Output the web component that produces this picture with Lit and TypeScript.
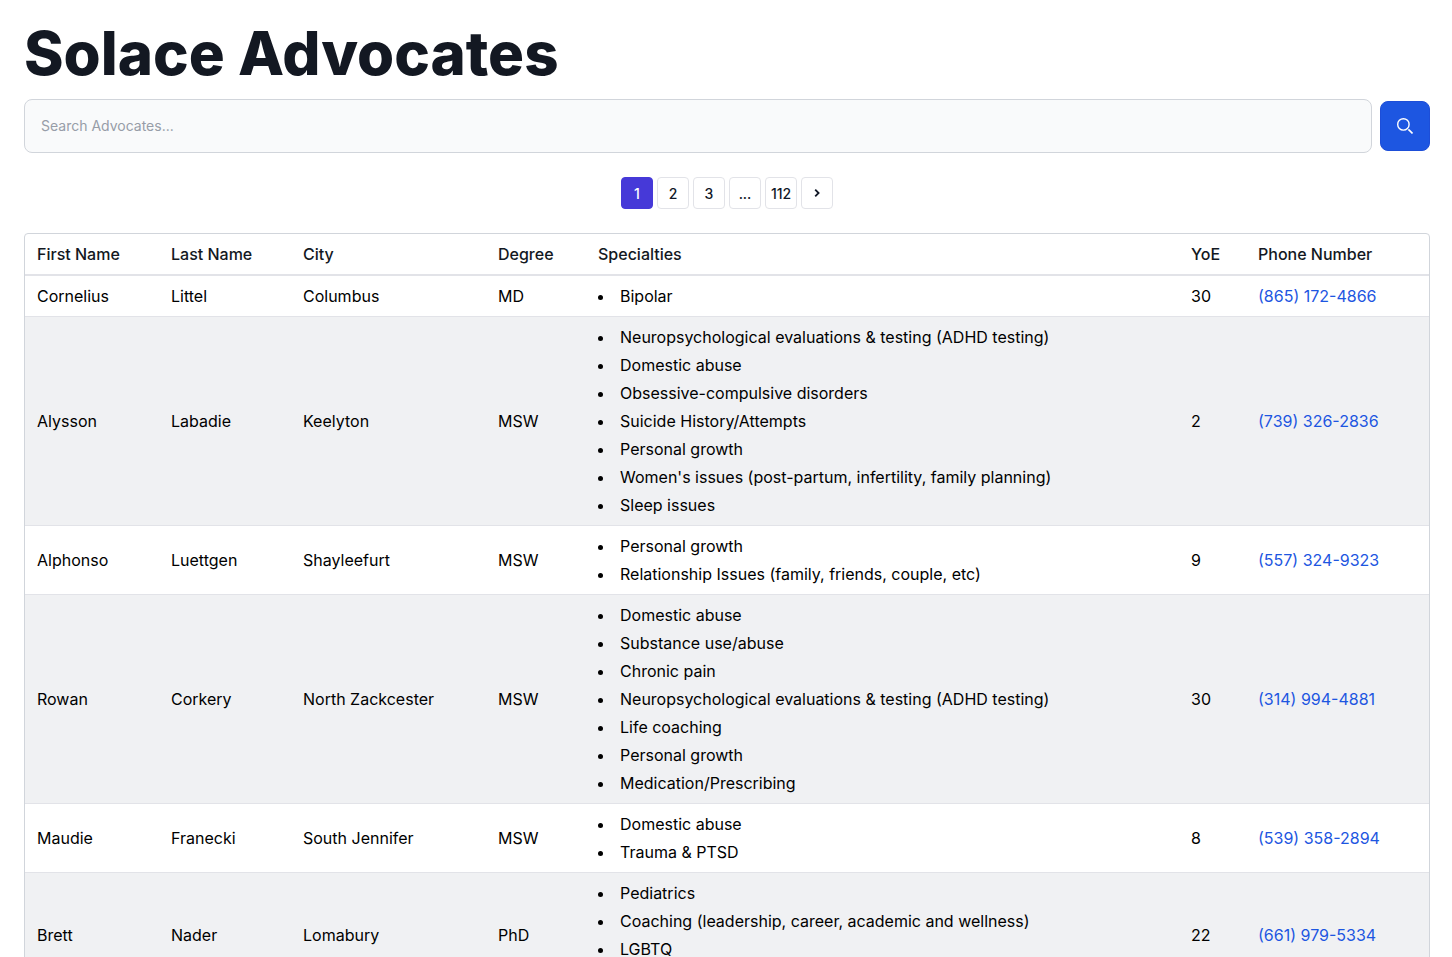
import { LitElement, html, css } from "lit";
import { customElement, state } from "lit/decorators.js";

interface Advocate {
  first: string;
  last: string;
  city: string;
  degree: string;
  specialties: string[];
  years: number;
  phone: string;
}

const ADVOCATES: Advocate[] = [
  { first: "Cornelius", last: "Littel", city: "Columbus", degree: "MD", specialties: ["Bipolar"], years: 30, phone: "(865) 172-4866" },
  {
    first: "Alysson", last: "Labadie", city: "Keelyton", degree: "MSW",
    specialties: [
      "Neuropsychological evaluations & testing (ADHD testing)",
      "Domestic abuse",
      "Obsessive-compulsive disorders",
      "Suicide History/Attempts",
      "Personal growth",
      "Women's issues (post-partum, infertility, family planning)",
      "Sleep issues",
    ],
    years: 2, phone: "(739) 326-2836",
  },
  {
    first: "Alphonso", last: "Luettgen", city: "Shayleefurt", degree: "MSW",
    specialties: ["Personal growth", "Relationship Issues (family, friends, couple, etc)"],
    years: 9, phone: "(557) 324-9323",
  },
  {
    first: "Rowan", last: "Corkery", city: "North Zackcester", degree: "MSW",
    specialties: [
      "Domestic abuse",
      "Substance use/abuse",
      "Chronic pain",
      "Neuropsychological evaluations & testing (ADHD testing)",
      "Life coaching",
      "Personal growth",
      "Medication/Prescribing",
    ],
    years: 30, phone: "(314) 994-4881",
  },
  { first: "Maudie", last: "Franecki", city: "South Jennifer", degree: "MSW", specialties: ["Domestic abuse", "Trauma & PTSD"], years: 8, phone: "(539) 358-2894" },
  {
    first: "Brett", last: "Nader", city: "Lomabury", degree: "PhD",
    specialties: ["Pediatrics", "Coaching (leadership, career, academic and wellness)", "LGBTQ", "Life coaching"],
    years: 22, phone: "(661) 979-5334",
  },
];

@customElement("app-root")
export class AppRoot extends LitElement {
  @state() private page = 1;

  static styles = css`
    :host {
      display: block;
      box-sizing: border-box;
      height: 100vh;
      overflow-y: auto;
      scrollbar-width: none;
      padding: 24px 22px 0 24px;
      background: #fff;
      color: #000;
      font: 400 16px/24px Inter, sans-serif;
    }
    *, *::before, *::after { box-sizing: border-box; }
    button, input { font-family: inherit; margin: 0; }
    h1 {
      margin: 0 0 17px;
      color: #131822;
      font-size: 60px;
      font-weight: 800;
      line-height: 58px;
    }
    .search { display: flex; align-items: center; gap: 8px; }
    .field {
      flex: 1;
      min-width: 0;
      height: 54px;
      padding: 15px 16px 17px;
      border: 1px solid #d1d5db;
      border-radius: 8px;
      background: #f9fafb;
      color: #111827;
      font-size: 14px;
      line-height: 20px;
    }
    .field::placeholder { color: #979da8; opacity: 1; }
    .go {
      display: flex;
      align-items: center;
      justify-content: center;
      width: 50px;
      height: 50px;
      padding: 0;
      border: 1px solid #1d4ed8;
      border-radius: 8px;
      background: #1d56e1;
      color: #fff;
    }
    .pages {
      display: flex;
      justify-content: center;
      gap: 4px;
      margin: 24px 0;
      padding: 0;
      list-style: none;
    }
    .page {
      display: flex;
      align-items: center;
      justify-content: center;
      width: 32px;
      height: 32px;
      padding: 2px 0 0;
      border: 1px solid #e2e3e8;
      border-radius: 4px;
      background: #fff;
      color: #111827;
      font-size: 14px;
      font-weight: 500;
      line-height: 20px;
    }
    .page.arrow { padding: 0; }
    .page.current { border-color: #4639d8; background: #4639d8; color: #fff; }
    .frame { border: 1px solid #d1d5db; border-radius: 4px; }
    table { width: 100%; border-collapse: collapse; table-layout: fixed; }
    th { padding: 8px 12px; text-align: left; font-weight: 500; color: #131822; }
    td { padding: 6px 12px; border-top: 1px solid #e2e3e8; vertical-align: middle; }
    tbody tr:first-child td { border-top: 2px solid #e2e3e8; }
    tbody tr:nth-child(even) { background: #f0f1f3; }
    .c-first { width: 134px; }
    .c-last { width: 132px; }
    .c-city { width: 195px; }
    .c-degree { width: 100px; }
    .c-years { width: 67px; }
    .c-phone { width: 183px; }
    .list { margin: 0; padding: 0; list-style: disc inside; line-height: 28px; }
    .phone { color: #1d56e1; text-decoration: none; }
  `;

  private pageButton(n: number) {
    const current = n === this.page;
    return html`<li>
      <button class="page ${current ? "current" : ""}" aria-current=${current ? "page" : "false"} @click=${() => (this.page = n)}>${n}</button>
    </li>`;
  }

  render() {
    return html`
      <h1>Solace Advocates</h1>
      <form class="search" role="search" @submit=${(e: Event) => e.preventDefault()}>
        <input class="field" type="text" aria-label="Search advocates" placeholder="Search Advocates..." />
        <button class="go" type="submit" aria-label="Search">
          <svg width="16" height="16" viewBox="0 0 16 16" fill="none" stroke="currentColor" stroke-width="1.4" aria-hidden="true">
            <circle cx="6.4" cy="6.4" r="5.7" />
            <path d="M11.4 11.4l4.1 4.1" stroke-width="1.6" />
          </svg>
        </button>
      </form>
      <nav aria-label="Pagination">
        <ol class="pages">
          ${[1, 2, 3].map((n) => this.pageButton(n))}
          <li><button class="page">...</button></li>
          ${this.pageButton(112)}
          <li>
            <button class="page arrow" aria-label="Next page" @click=${() => (this.page = Math.min(112, this.page + 1))}>
              <svg width="12" height="12" viewBox="0 0 12 12" fill="none" stroke="currentColor" stroke-width="1.8" aria-hidden="true">
                <path d="M4.2 2.6L7.6 6L4.2 9.4" />
              </svg>
            </button>
          </li>
        </ol>
      </nav>
      <div class="frame">
        <table>
          <colgroup>
            <col class="c-first" /><col class="c-last" /><col class="c-city" /><col class="c-degree" /><col /><col class="c-years" /><col class="c-phone" />
          </colgroup>
          <thead>
            <tr>
              ${["First Name", "Last Name", "City", "Degree", "Specialties", "YoE", "Phone Number"].map((t) => html`<th scope="col">${t}</th>`)}
            </tr>
          </thead>
          <tbody>
            ${ADVOCATES.map(
              (a) => html`<tr>
                <td>${a.first}</td>
                <td>${a.last}</td>
                <td>${a.city}</td>
                <td>${a.degree}</td>
                <td><ul class="list">${a.specialties.map((s) => html`<li>${s}</li>`)}</ul></td>
                <td>${a.years}</td>
                <td><a class="phone" href="tel:${a.phone.replace(/\D/g, "")}">${a.phone}</a></td>
              </tr>`
            )}
          </tbody>
        </table>
      </div>
    `;
  }
}
